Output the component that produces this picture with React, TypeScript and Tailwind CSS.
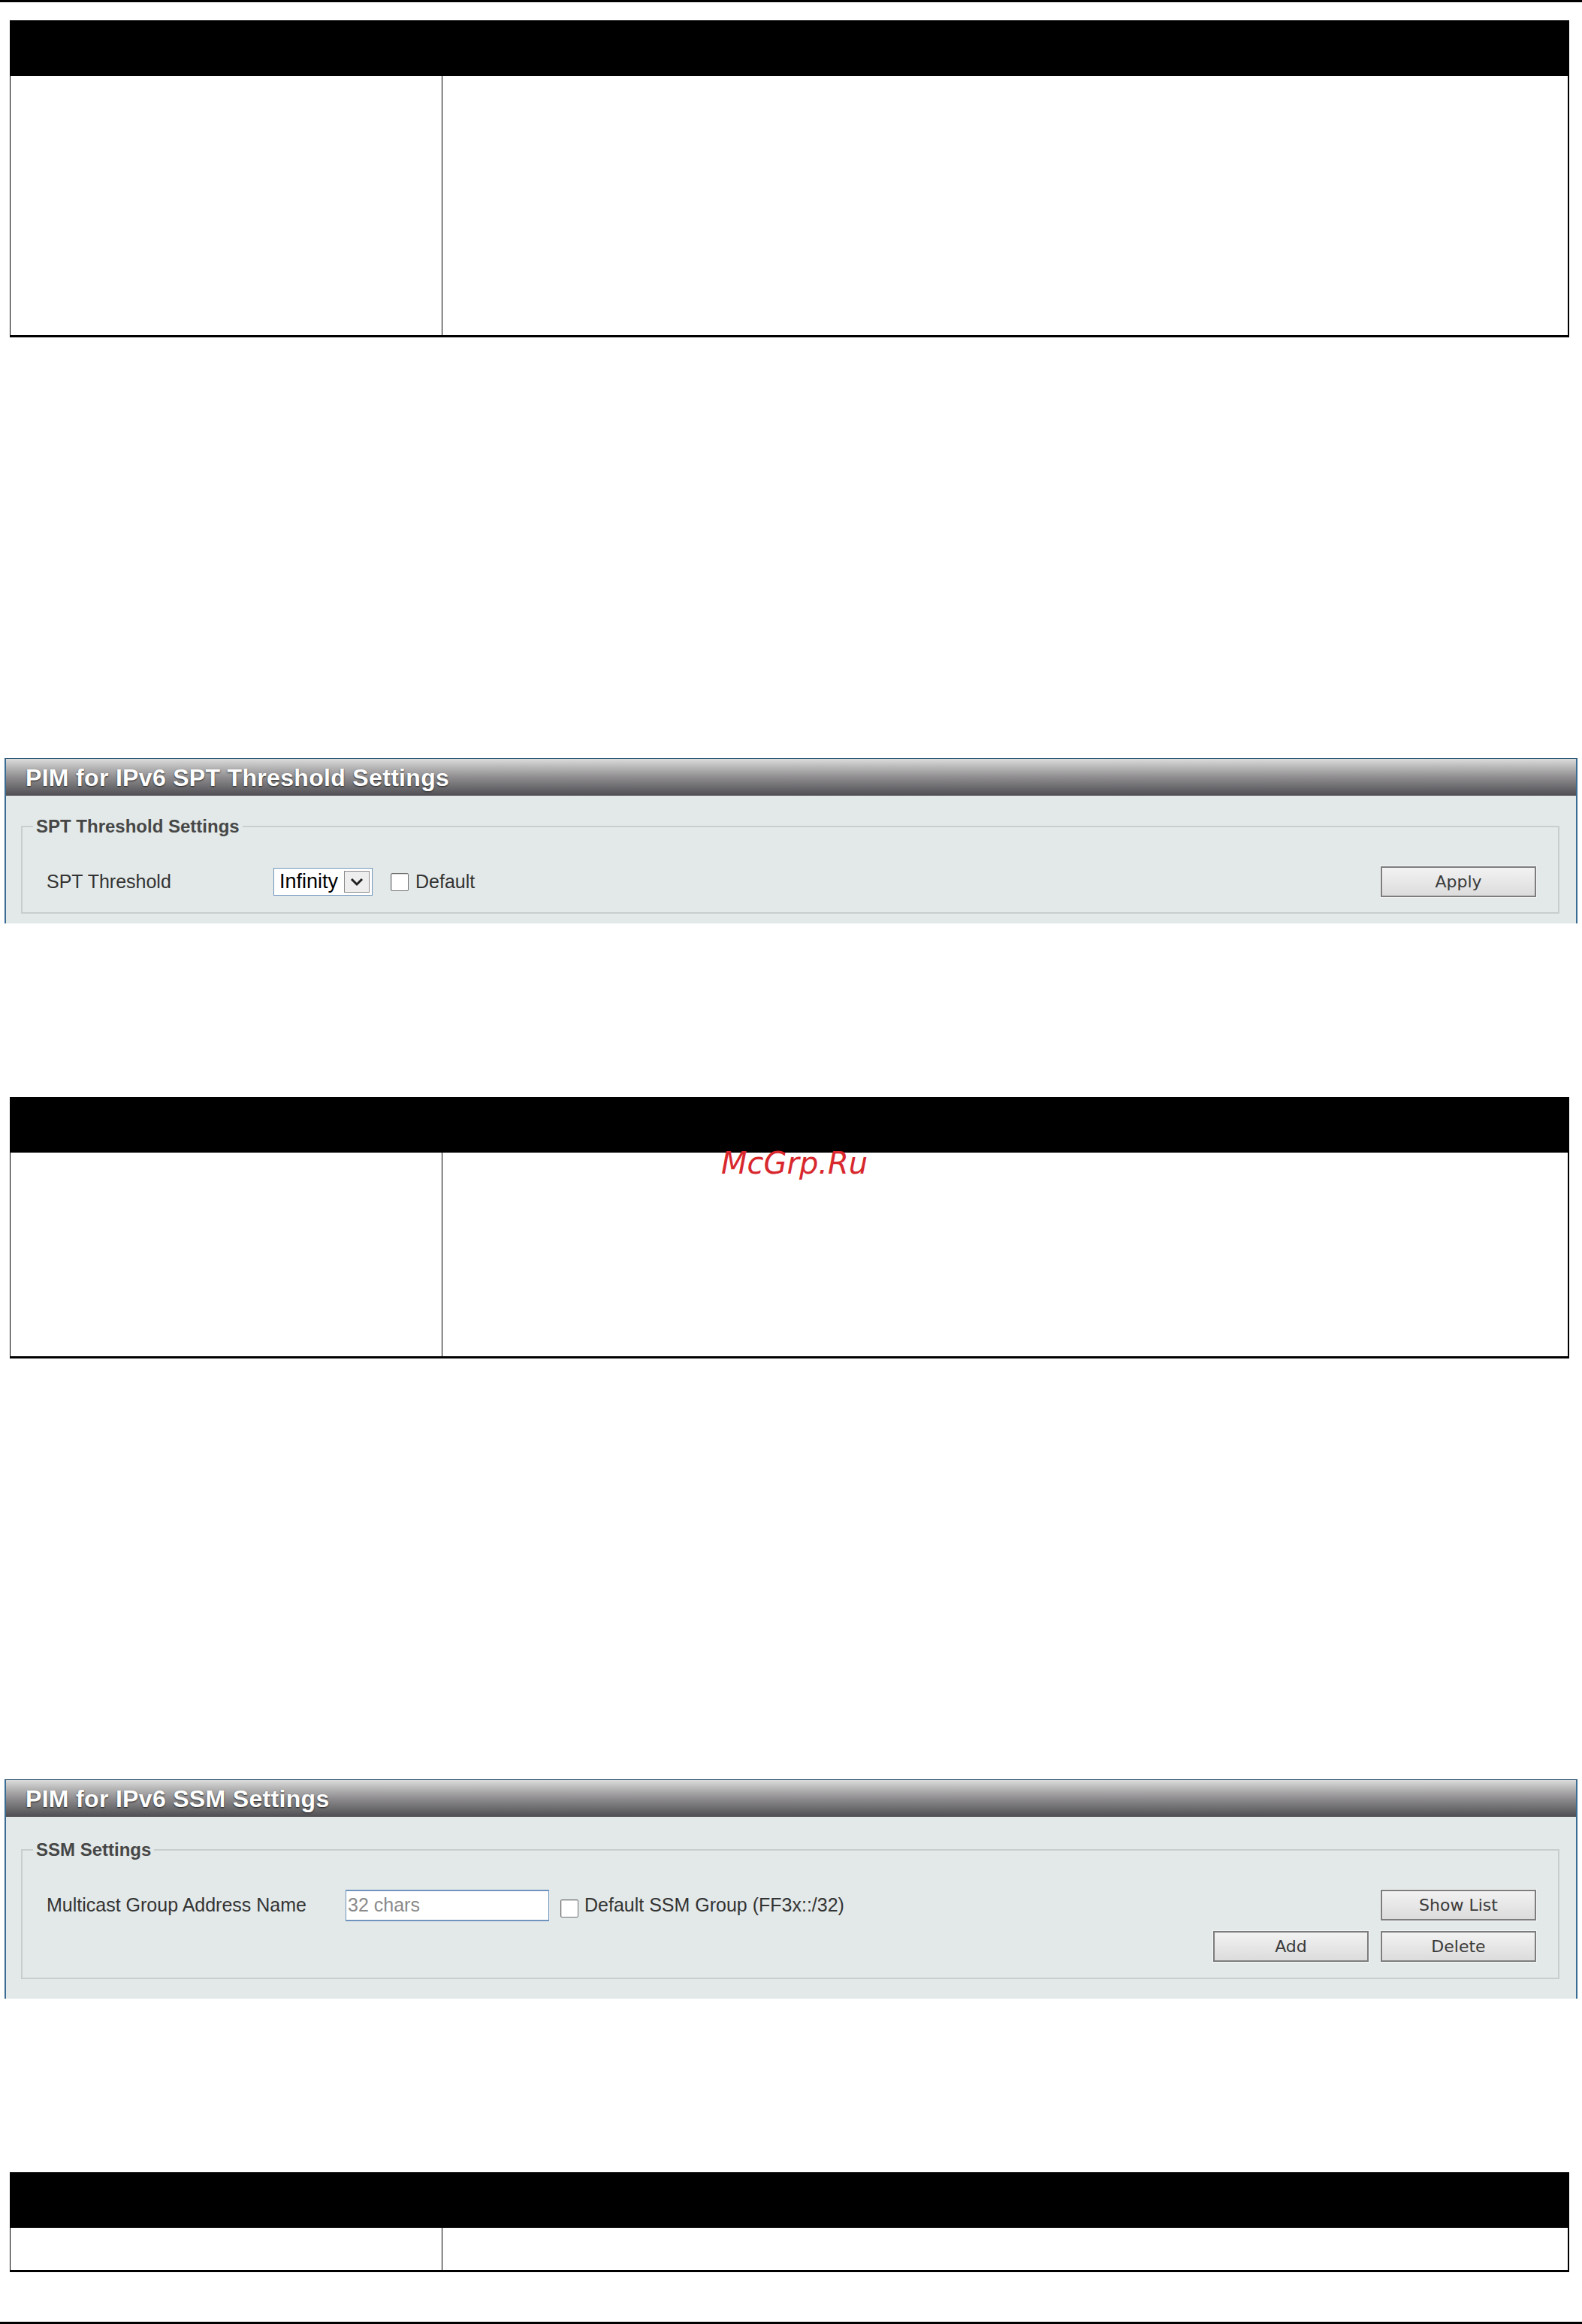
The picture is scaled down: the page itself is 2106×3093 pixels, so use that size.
import type { ReactNode } from 'react'

const SANS = 'font-["Liberation_Sans",Arial,sans-serif]'

function DocTable({ bodyHeight, className = '' }: { bodyHeight: string; className?: string }) {
  return (
    <div className={`ml-[13px] w-[2076px] ${className}`}>
      <div className="h-[74px] bg-black" />
      <div className={`grid grid-cols-[575px_1fr] border-b-[3px] border-l border-r-2 border-black ${bodyHeight}`}>
        <div className="border-r border-black" />
        <div />
      </div>
    </div>
  )
}

function PanelButton({ children }: { children: ReactNode }) {
  return (
    <button
      type="button"
      className='h-[41px] w-[207px] border-2 border-[#7d7d7d] bg-gradient-to-b from-[#f2f2f2] to-[#dcdcdc] font-["DejaVu_Sans",sans-serif] text-[22px] text-[#3a3a3a] shadow-[0_0_0_1px_#f4f6f6]'
    >
      {children}
    </button>
  )
}

function Checkbox() {
  return <span className="inline-block h-[24px] w-[24px] rounded-[2px] border border-[#6f6f6f] bg-white shadow-[inset_1px_1px_0_#d8d8d8]" />
}

function Panel({ title, children, className = '' }: { title: string; children: ReactNode; className?: string }) {
  return (
    <section className={`ml-[6px] w-[2094px] border-t border-[#2f5877] ${className}`}>
      <div className="flex h-[49px] items-center border-x-2 border-[#3b6c93] bg-gradient-to-b from-[#dcdcdc] via-[#8f8d8f] to-[#4f4f53] pl-[26px]">
        <h2 className={`${SANS} text-[32px] font-bold leading-none tracking-[0.01em] text-white [text-shadow:0_1px_2px_#222]`}>
          {title}
        </h2>
      </div>
      <div className="border-x-2 border-[#3b6c93] bg-[#e3e9e9]">{children}</div>
    </section>
  )
}

function Legend({ children }: { children: ReactNode }) {
  return (
    <legend className={`${SANS} -ml-[18px] px-[4px] text-[24px] font-bold leading-[28px] text-[#474747]`}>
      {children}
    </legend>
  )
}

export default function App() {
  return (
    <div className="relative min-h-[3093px] w-[2106px] bg-white">
      <div className="h-[3px] bg-black" />

      <DocTable className="mt-[24px]" bodyHeight="h-[348px]" />

      <Panel title="PIM for IPv6 SPT Threshold Settings" className="mt-[560px]">
        <div className="px-[20px] pb-[13px] pt-[27px] pr-[22px]">
          <fieldset className="border-2 border-[#c8cece] pb-[21px] pl-[32px] pr-[29px] pt-[40px]">
            <Legend>SPT Threshold Settings</Legend>
            <div className={`${SANS} flex h-[39px] items-center text-[25px] text-[#333]`}>
              <span className="w-[302px]">SPT Threshold</span>
              <div className="flex h-[37px] w-[132px] items-center justify-between border border-[#6f94bd] bg-white pl-[7px] pr-[3px]">
                <span className="text-[27px] leading-none text-black">Infinity</span>
                <span className="flex h-[29px] w-[34px] items-center justify-center border border-[#8a8a8a] bg-[#eeeeee]">
                  <svg width="18" height="12" viewBox="0 0 18 12" fill="none">
                    <path d="M2 2l7 7 7-7" stroke="#222" strokeWidth="3" />
                  </svg>
                </span>
              </div>
              <span className="ml-[24px] flex items-center">
                <Checkbox />
              </span>
              <span className="ml-[9px]">Default</span>
              <span className="ml-auto">
                <PanelButton>Apply</PanelButton>
              </span>
            </div>
          </fieldset>
        </div>
      </Panel>

      <div className="relative">
        <DocTable className="mt-[231px]" bodyHeight="h-[274px]" />
        <span className='absolute left-[960px] top-[68px] font-["DejaVu_Sans",sans-serif] text-[40px] italic leading-none text-[#d8282e]'>
          McGrp.Ru
        </span>
      </div>

      <Panel title="PIM for IPv6 SSM Settings" className="mt-[560px]">
        <div className="px-[20px] pb-[26px] pt-[30px] pr-[22px]">
          <fieldset className="border-2 border-[#c8cece] pb-[21px] pl-[32px] pr-[29px] pt-[39px]">
            <Legend>SSM Settings</Legend>
            <div className="flex items-start justify-between">
              <div className={`${SANS} flex h-[42px] items-center text-[25px] text-[#333]`}>
                <span className="w-[398px]">Multicast Group Address Name</span>
                <div className="flex h-[42px] w-[271px] items-center border border-y-2 border-[#6f94bd] bg-white pl-[2px]">
                  <span className="text-[25px] text-[#8a8a8a]">32 chars</span>
                </div>
                <span className="ml-[15px] flex items-center pt-[8px]">
                  <Checkbox />
                </span>
                <span className="ml-[8px]">Default SSM Group (FF3x::/32)</span>
              </div>
              <div className="flex flex-col items-end gap-[14px]">
                <PanelButton>Show List</PanelButton>
                <div className="flex gap-[16px]">
                  <PanelButton>Add</PanelButton>
                  <PanelButton>Delete</PanelButton>
                </div>
              </div>
            </div>
          </fieldset>
        </div>
      </Panel>

      <DocTable className="mt-[231px]" bodyHeight="h-[59px]" />

      <div className="mt-[66px] h-[4px] bg-black" />
    </div>
  )
}
